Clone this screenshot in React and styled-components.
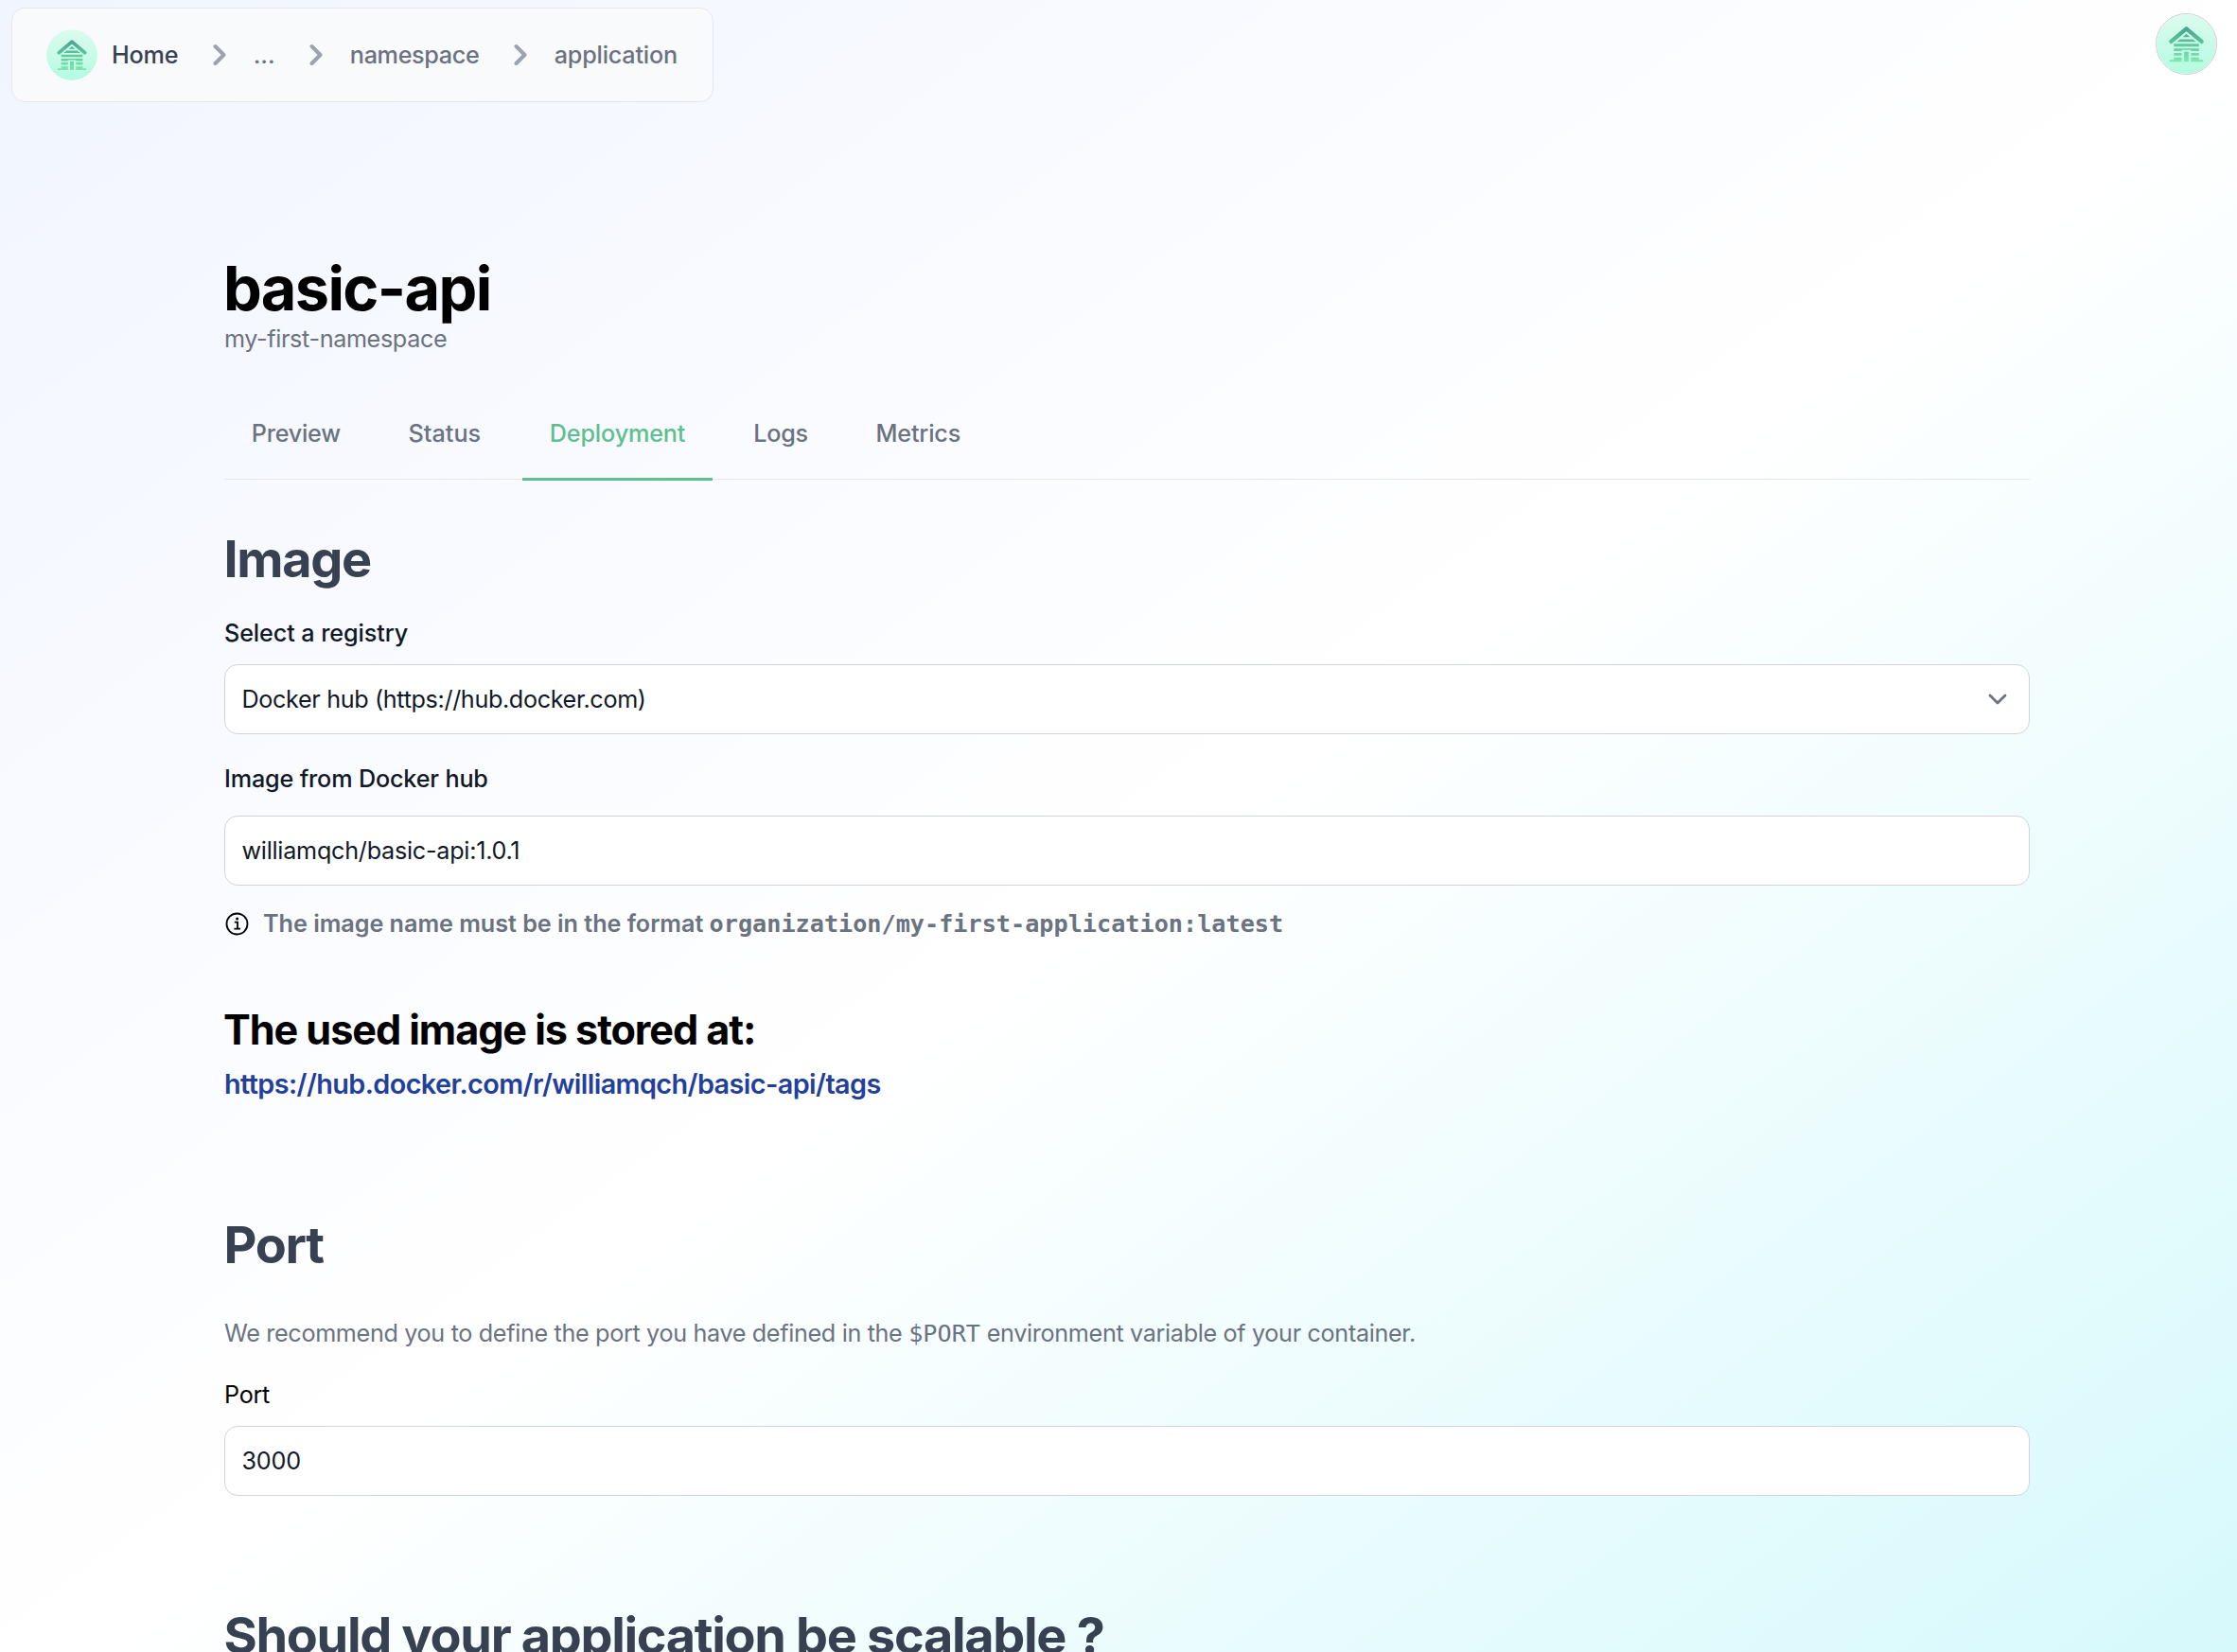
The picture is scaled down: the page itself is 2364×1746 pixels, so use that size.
import React from "react";
import styled, { createGlobalStyle, css } from "styled-components";

const GlobalStyle = createGlobalStyle`
  *, *::before, *::after { box-sizing: border-box; }
  body {
    margin: 0;
    height: 1746px;
    overflow: hidden;
    font-family: Inter, "Liberation Sans", sans-serif;
    font-size: 25.2px;
    line-height: 36px;
    color: #000;
  }
  h1, h2, h3, p { margin: 0; }
`;

const Page = styled.div`
  height: 1746px;
  overflow: hidden;
  background: linear-gradient(to bottom right, #f1f5ff, #ffffff 52%, #d6f9fc);
`;

const TopBar = styled.header`
  display: flex;
  justify-content: space-between;
  align-items: flex-start;
  height: 108px;
  padding: 8px 21px 0 12px;
`;

const Breadcrumb = styled.nav`
  display: flex;
  align-items: center;
  height: 100px;
  width: 742px;
  padding: 0 36px;
  border: 1px solid #e5e7eb;
  border-radius: 14px;
  background: #f9fafb;
  font-weight: 500;
  color: #6b7280;
  white-space: nowrap;
`;

const Crumb = styled.span`
  letter-spacing: ${(p) => p.$track || 0}px;
  ${(p) => p.$home && css`
    color: #374151;
    margin-left: 15px;
  `}
`;

const CrumbArrow = styled.svg`
  width: 14px;
  height: 24px;
  margin: 0 29px 0 36.3px;
  flex: none;
`;

const Logo = styled.svg`
  flex: none;
  display: block;
  width: ${(p) => p.$size}px;
  height: ${(p) => p.$size}px;
  border-radius: 50%;
`;

const AvatarButton = styled.div`
  margin-top: 6px;
  width: 65px;
  height: 65px;
  border: 1px solid #c9ced4;
  border-radius: 50%;
`;

const Main = styled.main`
  width: 1908px;
  margin: 161px 0 0 237px;
`;

const Title = styled.h1`
  text-indent: -1px;
  font-size: 64.8px;
  line-height: 72px;
  font-weight: 700;
  letter-spacing: ${(p) => p.$track}px;
`;

const Muted = styled.p`
  margin-top: ${(p) => p.$top || 0}px;
  color: #6b7280;
  letter-spacing: ${(p) => p.$track || 0}px;
  font-weight: ${(p) => p.$weight || 400};
  white-space: nowrap;
`;

const Tabs = styled.div`
  display: flex;
  gap: 14.4px;
  margin-top: 35px;
  border-bottom: 1px solid #e5e7eb;
`;

const Tab = styled.div`
  padding: 29px 0 29px 28.8px;
  width: ${(p) => p.$width}px;
  margin-bottom: -2px;
  border-bottom: 3px solid ${(p) => (p.$active ? "#5fc08f" : "transparent")};
  color: ${(p) => (p.$active ? "#5fc08f" : "#6b7280")};
  font-weight: 500;
  letter-spacing: ${(p) => p.$track || 0}px;
  white-space: nowrap;
`;

const Heading = styled.h2`
  margin-top: ${(p) => p.$top}px;
  text-indent: -0.5px;
  font-size: 54px;
  line-height: 60px;
  font-weight: 700;
  color: #374151;
  letter-spacing: ${(p) => p.$track}px;
  white-space: nowrap;
`;

const Label = styled.label`
  display: block;
  margin: ${(p) => p.$top}px 0 ${(p) => p.$bottom}px;
  color: ${(p) => (p.$plain ? "#000" : "#111827")};
  font-weight: ${(p) => (p.$plain ? 400 : 500)};
  letter-spacing: ${(p) => p.$track || 0}px;
`;

const Field = styled.div`
  display: flex;
  align-items: center;
  justify-content: space-between;
  height: 74px;
  padding: 0 23px 0 17.5px;
  border: 1px solid #d1d5db;
  border-radius: 14px;
  background: #fff;
  color: #111827;
  letter-spacing: ${(p) => p.$track || 0}px;
`;

const Chevron = styled.svg`
  width: 20px;
  height: 12px;
`;

const Hint = styled.div`
  display: flex;
  align-items: center;
  gap: 14px;
  margin-top: 22px;
`;

const InfoIcon = styled.svg`
  width: 27px;
  height: 27px;
  flex: none;
`;

const Code = styled.code`
  font-family: "DejaVu Sans Mono", "Liberation Mono", monospace;
  font-size: 25.2px;
  letter-spacing: 0;
`;

const Stored = styled.h3`
  margin-top: 64px;
  text-indent: -1px;
  font-size: 43.2px;
  line-height: 58px;
  font-weight: 700;
  letter-spacing: ${(p) => p.$track}px;
`;

const Link = styled.a`
  display: block;
  margin-top: 4px;
  font-size: 28.8px;
  line-height: 50px;
  font-weight: 600;
  color: #233f9c;
  letter-spacing: ${(p) => p.$track}px;
`;

function CabinLogo({ size, id }) {
  return (
    <Logo $size={size} viewBox="0 0 64 64">
      <defs>
        <linearGradient id={`${id}-bg`} x1="0" y1="0" x2="0" y2="1">
          <stop offset="0" stopColor="#dcfbef" />
          <stop offset="1" stopColor="#b4fbe2" />
        </linearGradient>
        <linearGradient id={`${id}-ink`} gradientUnits="userSpaceOnUse" x1="0" y1="14" x2="0" y2="52">
          <stop offset="0" stopColor="#46a68c" />
          <stop offset="1" stopColor="#7eeab0" />
        </linearGradient>
      </defs>
      <circle cx="32" cy="32" r="32" fill={`url(#${id}-bg)`} />
      <path
        d="M15.6 29.4 32 15.6 48.4 29.4"
        fill="none"
        stroke={`url(#${id}-ink)`}
        strokeWidth="4.4"
        strokeLinecap="round"
        strokeLinejoin="round"
      />
      <path
        fill={`url(#${id}-ink)`}
        d="M32 21.2 36 24.6H28ZM25.3 26.8H38.7L42.4 29.6H21.6ZM18.6 31.8H45.4V34.8H18.6ZM18.6 36.8H45.4V39.6H37V38.4H27V39.6H18.6ZM18.6 41.6H27V44.4H18.6ZM37 41.6H45.4V44.4H37ZM18.6 46.4H27V51H14V48.9H18.6ZM37 46.4H45.4V48.9H50V51H37ZM29.6 40.4H34.4V51H29.6Z"
      />
    </Logo>
  );
}

function Arrow() {
  return (
    <CrumbArrow viewBox="0 0 14 24" fill="none" stroke="#9ca3af" strokeWidth="4" strokeLinecap="round" strokeLinejoin="round">
      <path d="M2.5 3 11.5 12 2.5 21" />
    </CrumbArrow>
  );
}

const TABS = [
  { name: "Preview", width: 151.4, track: -0.25 },
  { name: "Status", width: 134.8 },
  { name: "Deployment", width: 201, active: true, track: -0.15 },
  { name: "Logs", width: 115, track: -0.2 },
  { name: "Metrics", width: 147, track: -0.2 },
];

export default function App() {
  return (
    <>
      <GlobalStyle />
      <Page>
        <TopBar>
          <Breadcrumb>
            <CabinLogo size={54} id="crumb" />
            <Crumb $home $track={-0.2}>Home</Crumb>
            <Arrow />
            <Crumb>...</Crumb>
            <Arrow />
            <Crumb $track={-0.35}>namespace</Crumb>
            <Arrow />
            <Crumb $track={-0.2}>application</Crumb>
          </Breadcrumb>
          <AvatarButton>
            <CabinLogo size={63} id="avatar" />
          </AvatarButton>
        </TopBar>
        <Main>
          <Title $track={-1.65}>basic-api</Title>
          <Muted $top={-1} $track={-0.37}>my-first-namespace</Muted>
          <Tabs>
            {TABS.map((t) => (
              <Tab key={t.name} $width={t.width} $active={t.active} $track={t.track}>{t.name}</Tab>
            ))}
          </Tabs>
          <Heading $top={54} $track={-1.35}>Image</Heading>
          <Label $top={30} $bottom={15} $track={-0.1}>Select a registry</Label>
          <Field $track={-0.36}>
            Docker hub (https://hub.docker.com)
            <Chevron viewBox="0 0 20 12" fill="none" stroke="#6b7280" strokeWidth="2.8" strokeLinecap="round" strokeLinejoin="round">
              <path d="M2 2 10 10 18 2" />
            </Chevron>
          </Field>
          <Label $top={29} $bottom={21} $track={-0.17}>Image from Docker hub</Label>
          <Field $track={-0.26}>williamqch/basic-api:1.0.1</Field>
          <Hint>
            <InfoIcon viewBox="0 0 27 27" fill="none" stroke="#000" strokeWidth="1.8">
              <circle cx="13.5" cy="13.5" r="11" />
              <path d="M10.8 11.6H14V18.4M10.4 18.6H17" />
              <circle cx="13.6" cy="8" r="1.5" fill="#000" stroke="none" />
            </InfoIcon>
            <Muted $weight={600} $track={-0.04}>
              The image name must be in the format <Code>organization/my-first-application:latest</Code>
            </Muted>
          </Hint>
          <Stored $track={-1.08}>The used image is stored at:</Stored>
          <Link $track={-0.58}>https://hub.docker.com/r/williamqch/basic-api/tags</Link>
          <Heading $top={115} $track={-1.35}>Port</Heading>
          <Muted $top={45} $track={-0.345}>
            We recommend you to define the port you have defined in the <Code>$PORT</Code> environment variable of your container.
          </Muted>
          <Label $plain $top={28} $bottom={15} $track={-0.3}>Port</Label>
          <Field $track={-0.2}>3000</Field>
          <Heading $top={118} $track={-1.33}>Should your application be scalable ?</Heading>
        </Main>
      </Page>
    </>
  );
}
